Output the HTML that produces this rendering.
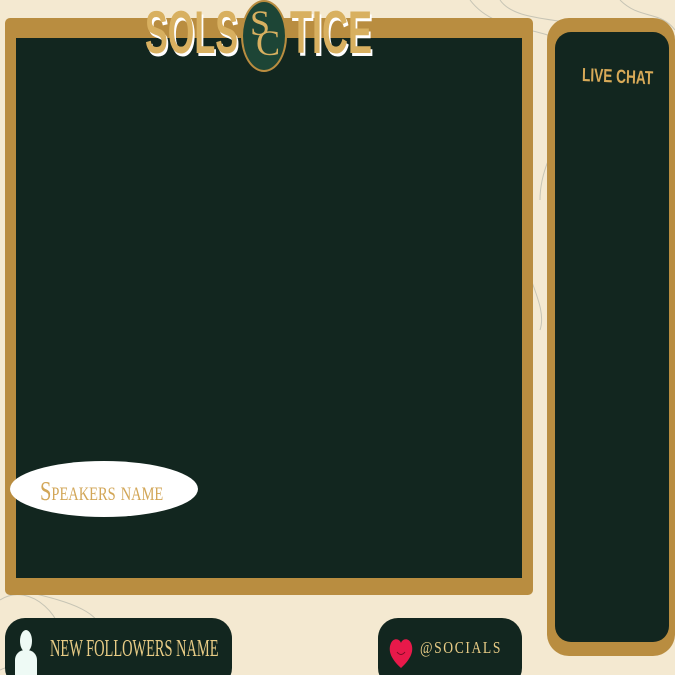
<!DOCTYPE html>
<html><head><style>
html,body{margin:0;width:675px;height:675px;overflow:hidden}
body{background:#f4e9d1;position:relative;font-family:"Liberation Sans",sans-serif}
div{position:absolute;box-sizing:border-box;white-space:nowrap}
</style></head><body>
<svg style="position:absolute;left:0;top:0" width="675" height="675">
<g fill="none" stroke="#a9aca2" stroke-width="1" opacity="0.6">
<path d="M470 0 C500 40 560 20 580 60 C600 100 540 140 540 200"/>
<path d="M500 0 C520 30 600 10 620 50"/>
<path d="M530 230 C510 260 550 300 540 330"/>
<path d="M0 600 C30 580 70 620 60 650 C50 675 20 660 0 670"/>
<path d="M20 590 C60 600 110 610 100 640"/>
<path d="M620 0 C640 20 660 10 675 30"/>
</g></svg>
<div style="left:5px;top:18px;width:528px;height:577px;background:#b98d40;border-radius:5px"></div>
<div style="left:16px;top:38px;width:506px;height:540px;background:#12261f"></div>
<div style="left:547px;top:18px;width:128px;height:638px;background:#b98d40;border-radius:22px"></div>
<div style="left:555px;top:32px;width:114px;height:610px;background:#12261f;border-radius:16px"></div>
<div style="left:582px;top:65px;font-size:19px;font-weight:bold;color:#d8aa58;transform:scaleX(0.72) rotate(2deg);transform-origin:left">LIVE CHAT</div>
<div style="left:10px;top:461px;width:188px;height:56px;background:#fff;border-radius:50%"></div>
<div style="left:40px;top:476px;font-family:'Liberation Serif',serif;font-size:27px;color:#d2a657;font-variant:small-caps;transform:scaleX(0.76);transform-origin:left">Speakers name</div>
<div style="left:145px;top:-2px;font-size:60px;font-weight:bold;color:#d8b060;text-shadow:3px 3px 0 #fff;transform:scaleX(0.57);transform-origin:left">SOLS</div>
<div style="left:241px;top:0px;width:46px;height:72px;background:#1d4536;border:2px solid #b98d40;border-radius:50%"></div>
<div style="left:250px;top:2px;font-family:'Liberation Serif',serif;font-size:36px;color:#d8b060">S</div>
<div style="left:256px;top:22px;font-family:'Liberation Serif',serif;font-size:36px;color:#d8b060">C</div>
<div style="left:290px;top:-2px;font-size:60px;font-weight:bold;color:#d8b060;text-shadow:3px 3px 0 #fff;transform:scaleX(0.6);transform-origin:left">TICE</div>
<div style="left:5px;top:618px;width:227px;height:70px;background:#12261f;border-radius:20px"></div>
<div style="left:20px;top:630px;width:12px;height:22px;background:#eefaf5;border-radius:50%"></div>
<div style="left:15px;top:650px;width:22px;height:40px;background:#eefaf5;border-radius:10px 10px 0 0"></div>
<div style="left:50px;top:636px;font-family:'Liberation Serif',serif;font-size:24px;color:#e8cc86;transform:scaleX(0.6);transform-origin:left">NEW FOLLOWERS NAME</div>
<div style="left:378px;top:618px;width:144px;height:70px;background:#12261f;border-radius:20px"></div>
<svg style="position:absolute;left:388px;top:636px" width="26" height="36"><path d="M13 32 C2 22 0 14 3 7 C6 1 12 3 13 7 C14 3 20 1 23 7 C26 14 24 22 13 32Z" fill="#e8194a"/><path d="M9 16 q4 5 8 0" stroke="#7a0a24" fill="none"/></svg>
<div style="left:420px;top:638px;font-family:'Liberation Serif',serif;font-size:17px;color:#e8cc86;letter-spacing:2px;transform:scaleX(0.8);transform-origin:left">@SOCIALS</div>
</body></html>
